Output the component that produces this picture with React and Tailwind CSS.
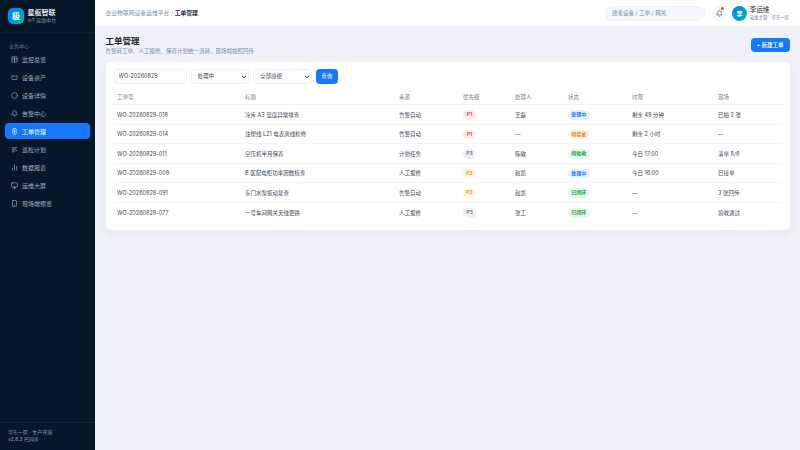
import React from "react";
import { Circle, Bell, BarChart2, Smartphone, Monitor, ChevronDown } from "lucide-react";

// small hand drawn icons for the ones lucide has no close match for
const PanelIcon = (props) => (
    <svg viewBox="0 0 24 24" fill="none" stroke="currentColor" strokeWidth="2.2" {...props}>
        <rect x="3" y="3" width="18" height="18" rx="2" />
        <path d="M3 10h18M12 3v18" />
    </svg>
);
const TrayIcon = (props) => (
    <svg viewBox="0 0 24 24" fill="none" stroke="currentColor" strokeWidth="2.2" {...props}>
        <path d="M3 6h6l1 2h4l1-2h6v10a3 3 0 0 1-3 3H6a3 3 0 0 1-3-3z" />
    </svg>
);
const OrderIcon = (props) => (
    <svg viewBox="0 0 24 24" fill="none" stroke="currentColor" strokeWidth="2.2" {...props}>
        <rect x="6" y="2" width="12" height="20" rx="3" />
        <path d="M9.5 8h5M9.5 12h5M9.5 16h5" />
    </svg>
);
const PlanIcon = (props) => (
    <svg viewBox="0 0 24 24" fill="none" stroke="currentColor" strokeWidth="2.2" {...props}>
        <path d="M3 6h18M3 11h14M3 16h10M3 20h8M20 14l-4 6" />
    </svg>
);

const navItems = [
    { label: "监控总览", icon: PanelIcon },
    { label: "设备资产", icon: TrayIcon },
    { label: "设备详情", icon: Circle },
    { label: "告警中心", icon: Bell },
    { label: "工单管理", icon: OrderIcon, active: true },
    { label: "巡检计划", icon: PlanIcon },
    { label: "数据报表", icon: BarChart2 },
    { label: "运维大屏", icon: Monitor },
    { label: "现场端预览", icon: Smartphone },
];

const priorityStyles = {
    P1: "bg-[#fdecec] text-[#e5383b]",
    P2: "bg-[#fff3e2] text-[#e8890c]",
    P3: "bg-[#eef2f7] text-[#5b6b7f]",
};

const statusStyles = {
    处理中: "bg-[#e6f0ff] text-[#1677ff]",
    待接单: "bg-[#fff3e2] text-[#e8890c]",
    待验收: "bg-[#e5f7ec] text-[#16a34a]",
    已闭环: "bg-[#e5f7ec] text-[#16a34a]",
};

const rows = [
    ["WO-20260829-018", "冷库 A3 温度异常排查", "告警自动", "P1", "王磊", "处理中", "剩余 49 分钟", "已拍 2 张"],
    ["WO-20260829-014", "注塑线 L21 电表离线检修", "告警自动", "P1", "—", "待接单", "剩余 2 小时", "—"],
    ["WO-20260829-011", "空压机半月保养", "计划任务", "P3", "陈敏", "待验收", "今日 17:00", "清单 8/8"],
    ["WO-20260829-009", "B 区配电柜功率因数核查", "人工报修", "P2", "赵凯", "处理中", "今日 16:00", "已接单"],
    ["WO-20260828-091", "东门水泵振动复查", "告警自动", "P2", "赵凯", "已闭环", "—", "3 张回传"],
    ["WO-20260828-077", "一号车间网关天线更换", "人工报修", "P3", "张工", "已闭环", "—", "验收通过"],
];

const headers = ["工单号", "标题", "来源", "优先级", "处理人", "状态", "时限", "现场"];
const colWidths = ["w-[128px]", "w-[154px]", "w-[64px]", "w-[52px]", "w-[53px]", "w-[64px]", "w-[86px]", ""];

function Sidebar() {
    return (
        <aside className="w-[95px] shrink-0 h-[450px] bg-[#061728] flex flex-col">
            <div className="h-[33px] flex items-center gap-[3.5px] pl-[8px] border-b border-[#0c2033]">
                <div className="w-[16px] h-[16px] rounded-[5px] bg-gradient-to-br from-[#1677ff] to-[#13b5b1] flex items-center justify-center text-white text-[8px] font-bold">极</div>
                <div>
                    <div className="text-[7px] leading-[9.5px] font-bold text-[#e3eaf3]">星枢智联</div>
                    <div className="text-[5px] leading-[7px] text-[#7f93a8]">IoT 运维中台</div>
                </div>
            </div>
            <div className="text-[5px] leading-[7px] text-[#6d8197] pl-[9px] mt-[9.5px] mb-[1.8px]">业务中心</div>
            <nav className="flex flex-col gap-[2px] px-[5px]">
                {navItems.map((item) => {
                    const Icon = item.icon;
                    return (
                        <div
                            key={item.label}
                            className={`h-[16px] rounded-[4px] flex items-center gap-[4.5px] pl-[5.5px] text-[6px] ${item.active ? "bg-[#1677ff] text-white" : "text-[#9dafc2]"}`}
                        >
                            <Icon width={7} height={7} strokeWidth={2.2} />
                            <span>{item.label}</span>
                        </div>
                    );
                })}
            </nav>
            <div className="mt-auto h-[28px] border-t border-[#0f2338] pl-[8px] pt-[6px] text-[5px] leading-[6.5px] text-[#8da0b5]">
                <div>华东一区 · 生产环境</div>
                <div>v2.6.3 已同步</div>
            </div>
        </aside>
    );
}

function Topbar() {
    return (
        <header className="h-[26px] bg-white flex items-center justify-between pl-[10.5px] pr-[10px]">
            <div className="text-[5.8px] text-[#8292a3]">
                企业物联网设备运维平台 / <span className="font-semibold text-[#1d2b3a]">工单管理</span>
            </div>
            <div className="flex items-center">
                <div className="w-[100px] h-[15px] rounded-full bg-[#f5f8fb] border border-[#eef2f6] flex items-center pl-[6px] text-[5.5px] text-[#7b8a9a]">搜索设备 / 工单 / 网关</div>
                <div className="relative ml-[6.5px] w-[15px] h-[15px] rounded-full bg-[#f5f8fb] flex items-center justify-center text-[#36475a]">
                    <Bell size={7} strokeWidth={2} />
                    <span className="absolute top-[1.5px] right-[2.5px] w-[3px] h-[3px] rounded-full bg-[#f03e3e]"></span>
                </div>
                <div className="ml-[5.5px] w-[15px] h-[15px] rounded-full bg-gradient-to-br from-[#1677ff] to-[#13b5b1] flex items-center justify-center text-white text-[6px] font-semibold">李</div>
                <div className="ml-[2.5px] w-[40.5px] pt-[1px]">
                    <div className="text-[6.7px] leading-[8.5px] text-[#1d2b3a]">李运维</div>
                    <div className="text-[4.5px] leading-[6.5px] text-[#708092] whitespace-nowrap">运维主管 · 华东一区</div>
                </div>
            </div>
        </header>
    );
}

function Pill({ className, children }) {
    return <span className={`inline-flex items-center justify-center h-[9.5px] rounded-full font-semibold text-[5px] ${className}`}>{children}</span>;
}

function FilterSelect({ width, label }) {
    return (
        <div className={`relative h-[14.5px] ${width}`}>
            <select className="block appearance-none w-full h-[14.5px] rounded-[4px] border border-[#eef1f5] pl-[6px] py-0 text-[5.5px] leading-[12px] text-[#3a4858] bg-white">
                <option>{label}</option>
            </select>
            <ChevronDown size={6} strokeWidth={4} className="absolute right-[2px] top-[4.5px] text-[#0f1a26]" />
        </div>
    );
}

function App() {
    return (
        <div className="w-[800px] h-[450px] overflow-hidden flex bg-[#eff3f8] font-['Inter','Noto_Sans_CJK_SC',sans-serif]">
            <Sidebar />
            <div className="flex-1 min-w-0">
                <Topbar />
                <main className="pl-[10.5px] pr-[10.5px] pt-[10px]">
                    <div className="flex items-start justify-between h-[26px]">
                        <div>
                            <h1 className="text-[8.5px] leading-[11px] font-bold text-[#17232f]">工单管理</h1>
                            <p className="text-[5.5px] leading-[8px] text-[#7b8a9a]">告警转工单、人工报修、保养计划统一流转，现场端拍照回传</p>
                        </div>
                        <button className="w-[39px] h-[14.5px] mt-[1.5px] rounded-[4px] bg-[#1677ff] text-white text-[5.5px] font-medium flex items-center justify-center">+ 新建工单</button>
                    </div>
                    <section className="bg-white rounded-[6px] h-[168px] px-[8px] pt-[7px] shadow-[0_4px_12px_rgba(20,40,70,0.05)]">
                        <div className="flex items-center gap-[4px] h-[14.5px]">
                            <input readOnly value="WO-20260829" className="block w-[73px] h-[14.5px] rounded-[4px] border border-[#eef1f5] px-[4px] text-[5.5px] text-[#3a4858] outline-none" />
                            <FilterSelect width="w-[58.5px]" label="处理中" />
                            <FilterSelect width="w-[58.5px]" label="全部班组" />
                            <button className="w-[22.5px] h-[14.5px] rounded-[4px] bg-[#1677ff] text-white text-[5.5px]">查询</button>
                        </div>
                        <table className="mt-[6px] w-full border-collapse table-fixed">
                            <thead>
                                <tr className="h-[15px] border-b border-[#f0f3f7]">
                                    {headers.map((h, i) => (
                                        <th key={h} className={`${colWidths[i]} pl-[3.5px] text-left font-normal text-[5.5px] text-[#738394]`}>{h}</th>
                                    ))}
                                </tr>
                            </thead>
                            <tbody>
                                {rows.map((r, idx) => (
                                    <tr key={r[0]} className={`h-[19.6px] text-[5.5px] text-[#3a4858] ${idx < rows.length - 1 ? "border-b border-[#f4f6f9]" : ""}`}>
                                        <td className="pl-[3.5px] pt-[1px]">{r[0]}</td>
                                        <td className="pl-[3.5px] pt-[1px]">{r[1]}</td>
                                        <td className="pl-[3.5px] pt-[1px]">{r[2]}</td>
                                        <td className="pl-[3.5px] pt-[1px]"><Pill className={`w-[13px] ${priorityStyles[r[3]]}`}>{r[3]}</Pill></td>
                                        <td className="pl-[3.5px] pt-[1px]">{r[4]}</td>
                                        <td className="pl-[3.5px] pt-[1px]"><Pill className={`w-[21.5px] ${statusStyles[r[5]]}`}>{r[5]}</Pill></td>
                                        <td className="pl-[3.5px] pt-[1px]">{r[6]}</td>
                                        <td className="pl-[3.5px] pt-[1px]">{r[7]}</td>
                                    </tr>
                                ))}
                            </tbody>
                        </table>
                    </section>
                </main>
            </div>
        </div>
    );
}

export default App;
